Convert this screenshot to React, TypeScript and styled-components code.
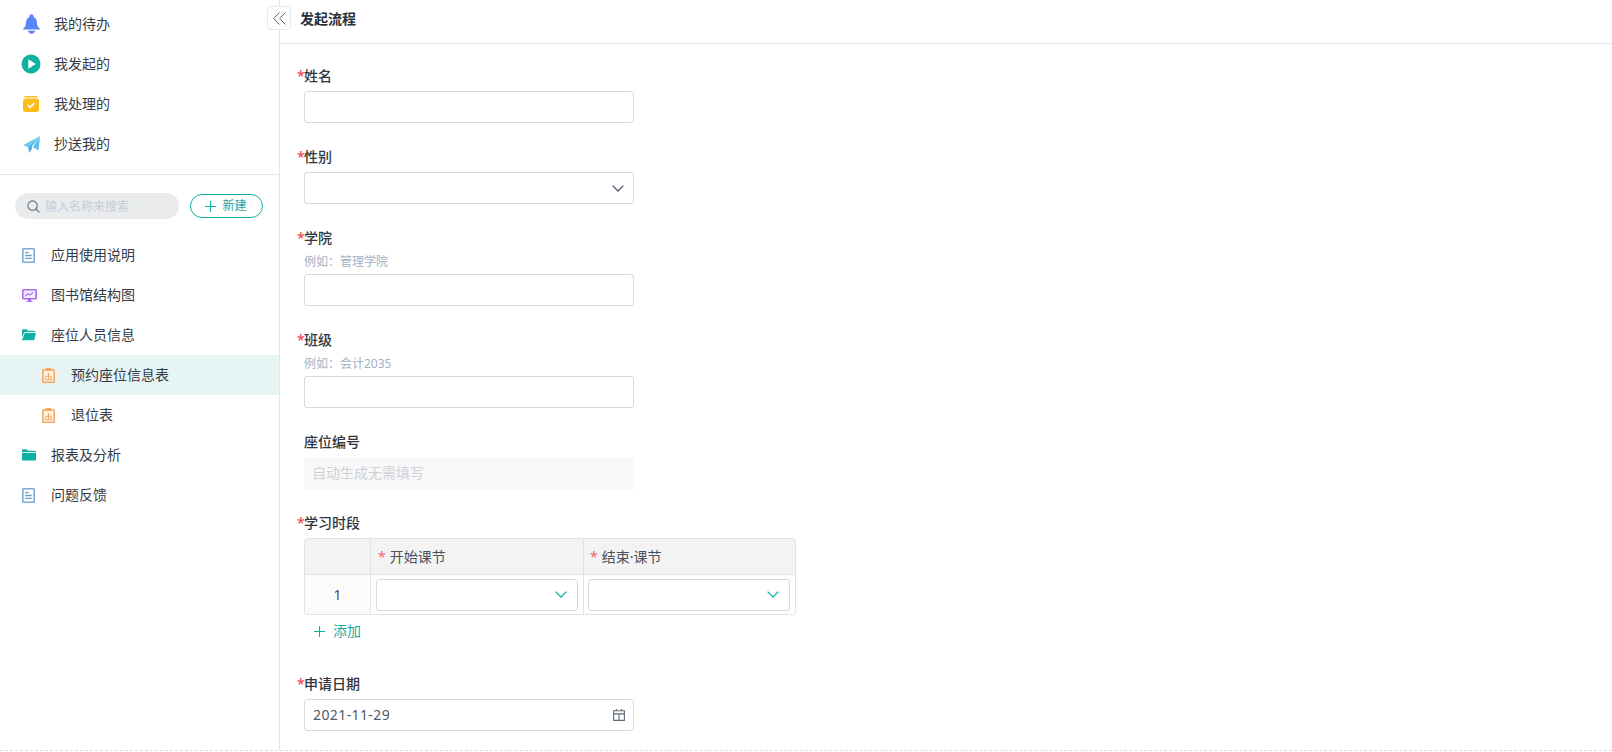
import React from 'react';
import styled, { createGlobalStyle } from 'styled-components';

const GlobalStyle = createGlobalStyle`
  html, body {
    margin: 0;
    padding: 0;
    background: #fff;
    font-family: "Noto Sans", "Noto Sans CJK SC", sans-serif;
    font-size: 14px;
    color: #2f3640;
  }
  * { box-sizing: border-box; }
`;

const BellIcon = () => (
  <svg width="17" height="20" viewBox="0 0 17 20">
    <path d="M6.300 2.900C6.300 1.300 7.200.3 8.500.3s2.200 1 2.200 2.600c2.100 1 3.200 2.900 3.200 5.400 0 2.900.8 4.700 2.800 6.200v1H.3v-1c2-1.500 2.800-3.300 2.800-6.200 0-2.500 1.100-4.400 3.200-5.400z" fill="#5b86fb" />
    <path d="M4.800 16.800h7.400c-.5 1.700-2 2.900-3.700 2.900s-3.200-1.200-3.700-2.900z" fill="#5b86fb" />
  </svg>
);

const PlayIcon = () => (
  <svg width="20" height="20" viewBox="0 0 20 20">
    <circle cx="10" cy="10" r="9.500" fill="#10b0a3" />
    <path d="M7.300 5.200L14.800 10l-7.500 4.800z" fill="#fff" />
  </svg>
);

const DoneIcon = () => (
  <svg width="16" height="16" viewBox="0 0 16 16">
    <path d="M2.500 0h11c.8 0 1.300.5 1.400 1.500H1.100C1.200.5 1.700 0 2.500 0z" fill="#fcbd1c" />
    <rect x="0" y="2.600" width="16" height="13.400" rx="2.500" fill="#fcbd1c" />
    <path d="M4.800 9l2.400 2.300 4.200-4.200" fill="none" stroke="#fff" strokeWidth="1.700" />
  </svg>
);

const PlaneIcon = () => (
  <svg width="17" height="17" viewBox="0 0 17 17">
    <path d="M17 0L15.600 14.200 9.800 11.200 17 0z" fill="#5bc0eb" />
    <path d="M17 0L0 9.200l5 1.800L17 0z" fill="#6ec9ee" />
    <path d="M17 0L5 11l1.300 6 3-4.400-.4-2L17 0z" fill="#4db6e6" />
  </svg>
);

const DocIcon = () => (
  <svg width="13" height="15" viewBox="0 0 13 15">
    <rect x=".8" y=".8" width="11.400" height="13.400" rx=".8" fill="#fff" stroke="#7ba9dc" strokeWidth="1.600" />
    <path d="M3.200 4.700h3.600M3.200 7.500h6.600M3.200 10.300h6.600" stroke="#7e9cc0" strokeWidth="1.300" fill="none" />
  </svg>
);

const ScreenIcon = () => (
  <svg width="15" height="13" viewBox="0 0 15 13">
    <rect x=".8" y=".8" width="13.400" height="9" rx=".8" fill="#f3ebfd" stroke="#a46ee6" strokeWidth="1.600" />
    <path d="M3.300 7l2.600-2.300 1.900 1.400 3.200-2.800" fill="none" stroke="#a46ee6" strokeWidth="1.100" />
    <path d="M4.500 12h6v1h-6zM6 10h3v2H6z" fill="#a46ee6" />
  </svg>
);

const FolderOpenIcon = () => (
  <svg width="14" height="12" viewBox="0 0 14 12">
    <path d="M0 1c0-.5.300-.8.800-.8h3.700L6 1.800h6.500c.5 0 .8.300.8.800V3H2.500L0 8z" fill="#10b0a3" />
    <path d="M2.800 4H14l-1.800 7.300H0z" fill="#10b0a3" />
  </svg>
);

const FolderIcon = () => (
  <svg width="14" height="12" viewBox="0 0 14 12">
    <path d="M0 1c0-.5.300-.8.800-.8h3.700L6 1.800h7.200c.5 0 .8.300.8.800V3H0z" fill="#10b0a3" />
    <rect x="0" y="3.800" width="14" height="7.700" fill="#10b0a3" />
  </svg>
);

const SheetIcon = () => (
  <svg width="13" height="15" viewBox="0 0 13 15">
    <rect x=".8" y="1.800" width="11.400" height="12.400" rx=".8" fill="#fdf1e6" stroke="#f5a763" strokeWidth="1.600" />
    <rect x="3.800" y="0" width="5.400" height="3" rx=".6" fill="#f5a763" />
    <path d="M6.500 5v6M3.800 11V8.200h5.400V11M3 11.700h7" stroke="#f0a76a" strokeWidth="1" fill="none" />
  </svg>
);

const SearchIcon = () => (
  <svg width="13" height="13" viewBox="0 0 13 13">
    <circle cx="5.600" cy="5.600" r="4.700" fill="none" stroke="#66707c" strokeWidth="1.100" />
    <path d="M9 9l3.400 3.400" stroke="#66707c" strokeWidth="1.200" />
  </svg>
);

const PlusIcon = () => (
  <svg width="11" height="11" viewBox="0 0 11 11">
    <path d="M5.500 0v11M0 5.500h11" stroke="#10b0a3" strokeWidth="1.100" />
  </svg>
);

const Chevron = ({ color }: { color: string }) => (
  <svg width="12" height="7" viewBox="0 0 12 7">
    <path d="M.6.600L6 6l5.400-5.400" fill="none" stroke={color} strokeWidth="1.300" />
  </svg>
);

const CalendarIcon = () => (
  <svg width="12" height="12" viewBox="0 0 12 12">
    <path d="M.6 1.800h10.800v9.600H.6zM.6 4.900h10.800M6 4.900v6.500M3.400 0v1.800M8.600 0v1.800" fill="none" stroke="#5f6b7c" strokeWidth="1.100" />
  </svg>
);

const DoubleLeft = () => (
  <svg width="13" height="13" viewBox="0 0 13 13">
    <path d="M6.500.5L.7 6.500l5.800 6M12.500.5L6.700 6.500l5.800 6" fill="none" stroke="#56606e" strokeWidth="1" />
  </svg>
);

const navItems = [
  { icon: <BellIcon />, label: '我的待办' },
  { icon: <PlayIcon />, label: '我发起的' },
  { icon: <DoneIcon />, label: '我处理的' },
  { icon: <PlaneIcon />, label: '抄送我的' },
];

export default function App() {
  return (
    <Page>
      <GlobalStyle />
      <Sidebar>
        <NavList>
          {navItems.map((item) => (
            <NavRow key={item.label}>
              <NavIcon>{item.icon}</NavIcon>
              {item.label}
            </NavRow>
          ))}
        </NavList>
        <SearchBar>
          <SearchBox>
            <SearchIcon />
            <SearchHint>输入名称来搜索</SearchHint>
          </SearchBox>
          <NewButton>
            <PlusIcon />
            新建
          </NewButton>
        </SearchBar>
        <Tree>
          <TreeRow><TreeIcon><DocIcon /></TreeIcon>应用使用说明</TreeRow>
          <TreeRow><TreeIcon><ScreenIcon /></TreeIcon>图书馆结构图</TreeRow>
          <TreeRow><TreeIcon><FolderOpenIcon /></TreeIcon>座位人员信息</TreeRow>
          <TreeRow $child $active><TreeIcon><SheetIcon /></TreeIcon>预约座位信息表</TreeRow>
          <TreeRow $child><TreeIcon><SheetIcon /></TreeIcon>退位表</TreeRow>
          <TreeRow><TreeIcon><FolderIcon /></TreeIcon>报表及分析</TreeRow>
          <TreeRow><TreeIcon><DocIcon /></TreeIcon>问题反馈</TreeRow>
        </Tree>
      </Sidebar>
      <CollapseButton><DoubleLeft /></CollapseButton>
      <Main>
        <Header>发起流程</Header>
        <Form>
          <Field>
            <Label><Star>*</Star>姓名</Label>
            <Input />
          </Field>
          <Field>
            <Label><Star>*</Star>性别</Label>
            <Input>
              <Chevron color="#4d5766" />
            </Input>
          </Field>
          <Field>
            <Label><Star>*</Star>学院</Label>
            <Hint>例如：管理学院</Hint>
            <Input />
          </Field>
          <Field>
            <Label><Star>*</Star>班级</Label>
            <Hint>例如：会计2035</Hint>
            <Input />
          </Field>
          <Field>
            <Label>座位编号</Label>
            <AutoBox>自动生成无需填写</AutoBox>
          </Field>
          <TableField>
            <Label><Star>*</Star>学习时段</Label>
            <Table>
              <HeadCell />
              <HeadCell><TableStar>*</TableStar>开始课节</HeadCell>
              <HeadCell $last><TableStar>*</TableStar>结束·课节</HeadCell>
              <IndexCell>1</IndexCell>
              <BodyCell>
                <CellSelect><Chevron color="#10b0a3" /></CellSelect>
              </BodyCell>
              <BodyCell $last>
                <CellSelect><Chevron color="#10b0a3" /></CellSelect>
              </BodyCell>
            </Table>
            <AddRow>
              <PlusIcon />
              添加
            </AddRow>
          </TableField>
          <Field>
            <Label><Star>*</Star>申请日期</Label>
            <DateInput>
              <DateText>2021-11-29</DateText>
              <CalendarIcon />
            </DateInput>
          </Field>
        </Form>
      </Main>
    </Page>
  );
}

const Page = styled.div`
  position: relative;
  display: flex;
  height: 751px;
  overflow: hidden;
  border-bottom: 1px dashed #dcdfe3;
`;

const Sidebar = styled.aside`
  width: 280px;
  flex: none;
  border-right: 1px solid #e3e5e8;
`;

const NavList = styled.div`
  padding: 4px 0 10px;
  border-bottom: 1px solid #e6e8ea;
`;

const NavRow = styled.div`
  display: flex;
  align-items: center;
  height: 40px;
  padding-left: 21px;
  line-height: 20px;
  color: #333b46;
`;

const NavIcon = styled.span`
  display: flex;
  justify-content: center;
  width: 20px;
  margin-right: 13px;
`;

const SearchBar = styled.div`
  display: flex;
  align-items: center;
  margin: 18px 0 16px 15px;
`;

const SearchBox = styled.div`
  display: flex;
  align-items: center;
  gap: 5px;
  width: 164px;
  height: 26px;
  padding-left: 12px;
  border-radius: 13px;
  background: #e9ebed;
`;

const SearchHint = styled.span`
  padding-top: 2px;
  font-size: 12px;
  line-height: 16px;
  color: #c6ced8;
`;

const NewButton = styled.div`
  display: flex;
  align-items: center;
  justify-content: center;
  gap: 6px;
  width: 73px;
  height: 24px;
  margin-left: 11px;
  padding-right: 1px;
  border: 1px solid #10b0a3;
  border-radius: 12px;
  font-size: 12px;
  line-height: 16px;
  color: #2e9c92;
`;

const Tree = styled.div``;

const TreeRow = styled.div<{ $child?: boolean; $active?: boolean }>`
  display: flex;
  align-items: center;
  height: 40px;
  padding-left: ${({ $child }) => ($child ? '42px' : '22px')};
  line-height: 20px;
  color: #333b46;
  background: ${({ $active }) => ($active ? '#e6f5f3' : 'transparent')};
`;

const TreeIcon = styled.span`
  display: flex;
  align-items: center;
  width: 29px;
`;

const CollapseButton = styled.div`
  position: absolute;
  left: 267px;
  top: 6px;
  display: flex;
  align-items: center;
  justify-content: center;
  width: 24px;
  height: 24px;
  background: #fff;
  border: 1px solid #e8e9eb;
  border-radius: 4px;
`;

const Main = styled.main`
  flex: 1;
  min-width: 0;
`;

const Header = styled.div`
  display: flex;
  align-items: center;
  height: 44px;
  padding: 0 0 5px 20px;
  border-bottom: 1px solid #e6e8ea;
  font-size: 14px;
  font-weight: 700;
  line-height: 20px;
  color: #27303c;
`;

const Form = styled.div`
  padding: 22px 0 0 24px;
`;

const Field = styled.div`
  width: 330px;
  margin-bottom: 24px;
`;

const TableField = styled.div`
  margin-bottom: 27px;
`;

const Label = styled.div`
  height: 20px;
  margin-bottom: 5px;
  font-size: 14px;
  font-weight: 500;
  line-height: 20px;
  color: #2f3640;
`;

const Star = styled.span`
  display: inline-block;
  width: 7px;
  margin-left: -7px;
  font-weight: 500;
  color: #f5484c;
`;

const Hint = styled.div`
  height: 16px;
  margin: 6px 0 4px;
  font-size: 12px;
  line-height: 16px;
  color: #a3b1c4;
`;

const Input = styled.div`
  display: flex;
  align-items: center;
  justify-content: flex-end;
  height: 32px;
  padding: 0 9px;
  background: #fff;
  border: 1px solid #d9d9d9;
  border-radius: 3px;
`;

const DateInput = styled(Input)`
  padding: 0 8px 1px 8px;
`;

const DateText = styled.span`
  flex: 1;
  font-size: 14px;
  letter-spacing: 0.4px;
  color: #4f5866;
`;

const AutoBox = styled.div`
  height: 32px;
  padding-left: 8px;
  background: #f8f8f8;
  font-size: 14px;
  line-height: 32px;
  color: #cdd2d9;
`;

const Table = styled.div`
  display: grid;
  grid-template-columns: 66px 213px 211px;
  grid-template-rows: 36px 39px;
  width: 492px;
  border: 1px solid #e3e3e3;
  border-radius: 3px;
`;

const HeadCell = styled.div<{ $last?: boolean }>`
  display: flex;
  align-items: center;
  padding-left: ${({ $last }) => ($last ? '6px' : '7px')};
  background: #f3f3f3;
  border-bottom: 1px solid #e3e3e3;
  border-right: ${({ $last }) => ($last ? 'none' : '1px solid #e3e3e3')};
  font-size: 14px;
  line-height: 20px;
  color: #4a525e;
`;

const TableStar = styled.span`
  margin-right: 4px;
  color: #f5686b;
`;

const IndexCell = styled.div`
  display: flex;
  align-items: center;
  justify-content: center;
  background: #fbfbfb;
  border-right: 1px solid #e3e3e3;
  font-size: 14px;
  color: #444d5a;
`;

const BodyCell = styled.div<{ $last?: boolean }>`
  display: flex;
  align-items: center;
  padding: ${({ $last }) => ($last ? '0 5px 0 4px' : '0 5px')};
  border-right: ${({ $last }) => ($last ? 'none' : '1px solid #e3e3e3')};
`;

const CellSelect = styled(Input)`
  flex: 1;
  padding-right: 10px;
`;

const AddRow = styled.div`
  display: flex;
  align-items: center;
  gap: 8px;
  height: 32px;
  padding-left: 10px;
  font-size: 14px;
  line-height: 20px;
  color: #1fa99c;
`;
